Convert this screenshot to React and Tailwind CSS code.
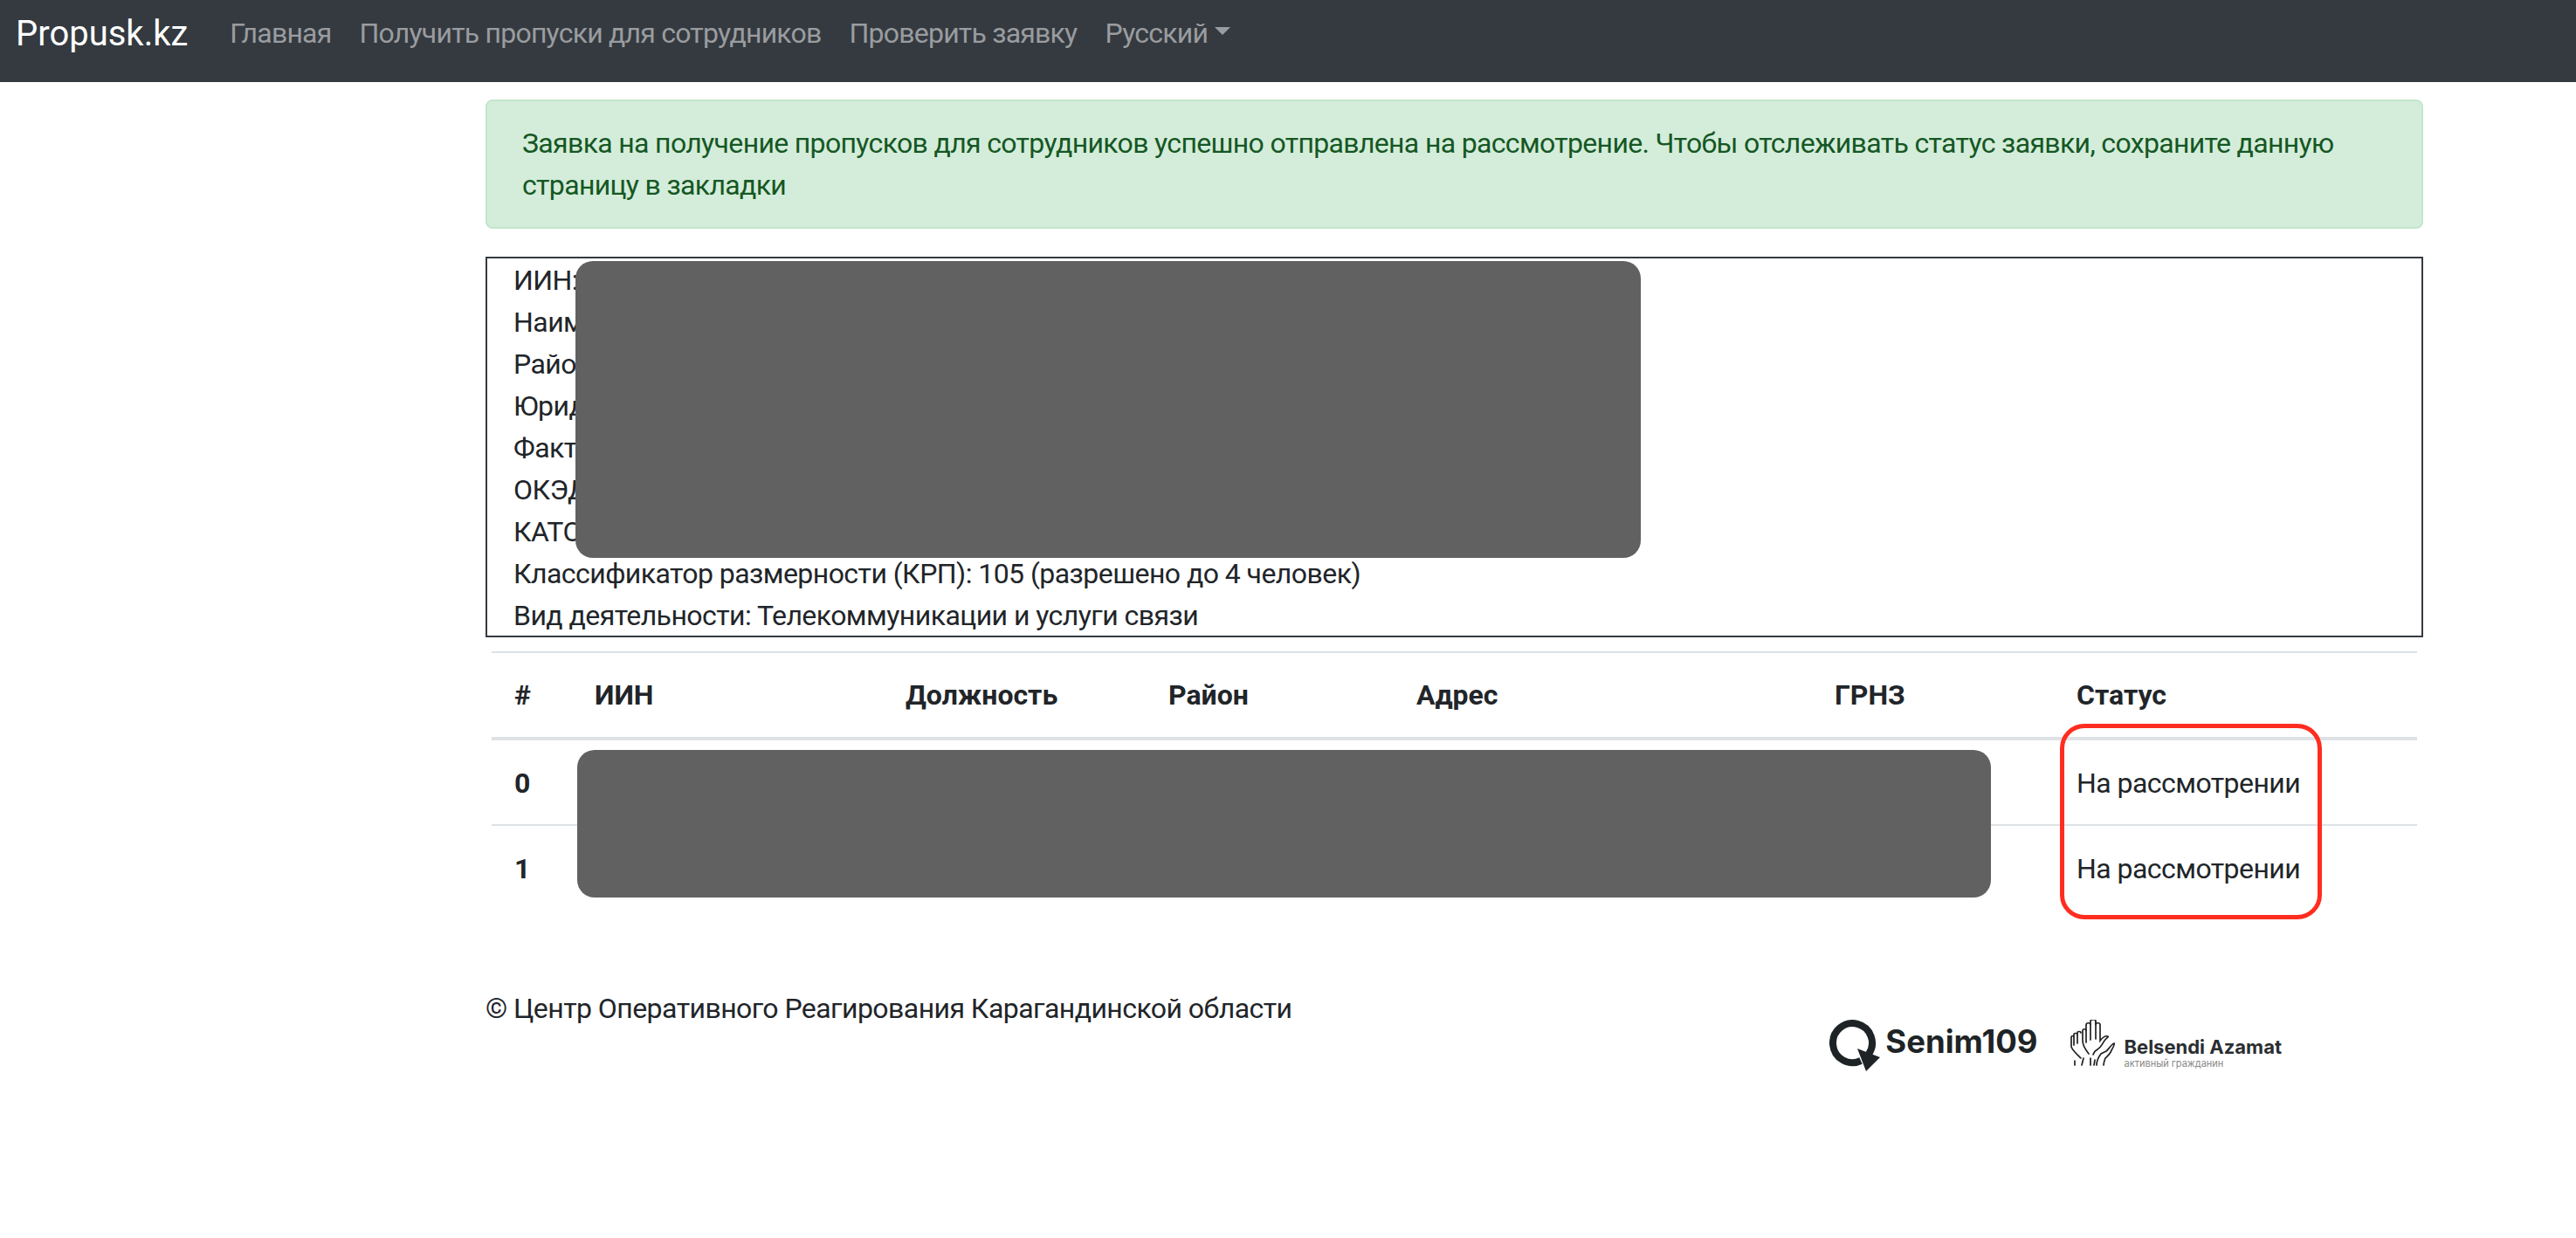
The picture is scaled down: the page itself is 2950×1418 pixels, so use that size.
const fontStack = { fontFamily: "Roboto, 'Liberation Sans', sans-serif" };
const logoFont = { fontFamily: "Inter, 'Liberation Sans', sans-serif" };

const columns = ["#", "ИИН", "Должность", "Район", "Адрес", "ГРНЗ", "Статус"];
const gridCols = "grid grid-cols-[92px_356px_301px_284px_479px_277px_1fr]";

const companyLines = [
  "ИИН:",
  "Наименование:",
  "Район:",
  "Юридический адрес:",
  "Фактический адрес:",
  "ОКЭД:",
  "КАТО:",
  "Классификатор размерности (КРП): 105 (разрешено до 4 человек)",
  "Вид деятельности: Телекоммуникации и услуги связи",
];

function SenimLogo() {
  return (
    <div className="flex items-start gap-[6px] tracking-normal" style={logoFont}>
      <svg width="58" height="59" viewBox="0 0 58 59" fill="none" className="shrink-0">
        <path d="M36 47A22.5 22.5 0 1 1 45 39.4" stroke="#1e2426" strokeWidth="8" />
        <path d="M32 33L58 43L42 59Z" fill="#1e2426" />
      </svg>
      <span className="text-[36.5px] leading-[50px] font-bold text-[#1e2426]">Senim109</span>
    </div>
  );
}

function AzamatLogo() {
  return (
    <div className="flex items-start gap-[10px] tracking-normal" style={logoFont}>
      <svg width="53" height="53" viewBox="0 0 53 53" fill="none" stroke="#222" strokeWidth="1.7" strokeLinecap="round" className="shrink-0">
        <path d="M22 39c-4-5-7-9-7-15V13c0-3 4-3 4 0V6c0-3 5-3 5 0V2c0-3 6-3 6 0v4c0-3 5-3 5 0v18c3-4 6-6 9-5 1 1-2 2-4 5-3 4-4 8-8 10-2 1-4 3-5 6" />
        <path d="M19 13v13M24 6v17M30 2v20" />
        <path d="M13 44c-4-4-9-8-11-13V20c0-2 3-2 3 0v-3c0-2 4-2 4 0v-2c0-2 4-2 4 0" />
        <path d="M5 20v9M9 17v10" />
        <path d="M31 52c0-5 2-9 5-13l6-3c2-1 6-8 9-9 1 2-2 6-3 8-1 4-5 7-7 9-1 3-2 5-2 8" />
        <path d="M6 52v-5M14 52l2-8M24 52v-8M28 52l1-6" />
      </svg>
      <div className="mt-[18px] flex flex-col">
        <span className="text-[22px] leading-[26px] font-bold text-[#2a2e30]">Belsendi Azamat</span>
        <span className="text-[11px] leading-[12px] text-[#8a8a8a]">активный гражданин</span>
      </div>
    </div>
  );
}

export default function App() {
  return (
    <div className="min-h-screen bg-white text-[32px] leading-[48px] tracking-[-0.55px] text-[#212529]" style={fontStack}>
      <nav className="flex h-[94px] items-start gap-[32px] bg-[#343a40] pl-[18px] pt-[14px] tracking-[-0.78px]">
        <a className="mr-[16px] text-[40px] leading-[50px] tracking-normal text-white">Propusk.kz</a>
        <a className="text-[#9a9c9f]">Главная</a>
        <a className="text-[#9a9c9f]">Получить пропуски для сотрудников</a>
        <a className="text-[#9a9c9f]">Проверить заявку</a>
        <a className="flex items-center gap-2 text-[#9a9c9f]">
          Русский
          <span className="mb-[6px] border-x-[9px] border-t-[9px] border-x-transparent border-t-[#9a9c9f]" />
        </a>
      </nav>

      <main className="pl-[556px] pr-[175px] pt-5">
        <div className="rounded-lg border-2 border-[#c3e6cb] bg-[#d4edda] px-[40px] py-[24px] tracking-[-0.66px] text-[#155724]">
          Заявка на получение пропусков для сотрудников успешно отправлена на рассмотрение. Чтобы отслеживать статус заявки, сохраните данную страницу в закладки
        </div>

        <div className="relative mt-8 h-[436px] border-2 border-[#343a40] pl-[30px] pt-[1px]">
          {companyLines.map((line) => (
            <p key={line} className="h-[48px]">{line}</p>
          ))}
          <div className="absolute left-[101px] top-[3px] h-[340px] w-[1220px] rounded-[20px] bg-[#616161]" />
        </div>

        <div className="relative mx-[7px] mt-4 border-t-2 border-[#dee2e6]">
          <div className={`${gridCols} border-b-4 border-[#dee2e6] py-6 font-bold tracking-normal`}>
            {columns.map((col) => (
              <div key={col} className="pl-[26px]">{col}</div>
            ))}
          </div>
          {[0, 1].map((row) => (
            <div key={row} className={`${gridCols} pt-[25px] pb-[23px] ${row > 0 ? "border-t-2 border-[#dee2e6]" : ""}`}>
              <div className="pl-[26px] font-bold">{row}</div>
              <div className="col-span-5" />
              <div className="pl-[26px]">На рассмотрении</div>
            </div>
          ))}
          <div className="absolute left-[98px] top-[111px] h-[169px] w-[1619px] rounded-[20px] bg-[#616161]" />
          <div className="absolute left-[1796px] top-[81px] h-[224px] w-[300px] rounded-[28px] border-[5px] border-[#ff2d20]" />
        </div>

        <footer className="mt-[89px] flex items-start justify-between">
          <p>© Центр Оперативного Реагирования Карагандинской области</p>
          <div className="mr-[162px] mt-[37px] flex items-start gap-[36px]">
            <SenimLogo />
            <AzamatLogo />
          </div>
        </footer>
      </main>
    </div>
  );
}
